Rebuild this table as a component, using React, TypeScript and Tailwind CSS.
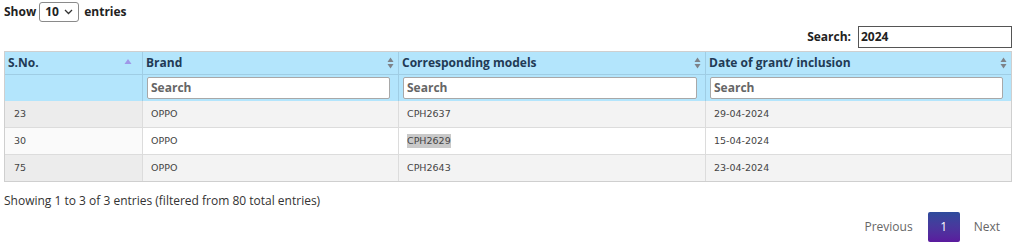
import React from "react";

const rows = [
  { sn: "23", brand: "OPPO", model: "CPH2637", date: "29-04-2024" },
  { sn: "30", brand: "OPPO", model: "CPH2629", date: "15-04-2024", hl: true },
  { sn: "75", brand: "OPPO", model: "CPH2643", date: "23-04-2024" },
];

function SortBoth() {
  return (
    <svg width="7" height="12" viewBox="0 0 7 12" className="shrink-0">
      <path d="M3.5 0.5 L6.5 5 L0.5 5 Z" fill="#7d8288" />
      <path d="M3.5 11.5 L6.5 7 L0.5 7 Z" fill="#7d8288" />
    </svg>
  );
}

function SortAsc() {
  return (
    <svg width="8" height="12" viewBox="0 0 8 12" className="shrink-0">
      <path d="M4 2 L7.5 7 L0.5 7 Z" fill="#9f97e8" />
    </svg>
  );
}

export default function App() {
  const font = { fontFamily: '"Open Sans", "Noto Sans", sans-serif' };
  const cellFont = { fontFamily: '"DejaVu Sans", Verdana, sans-serif' };
  return (
    <div className="w-[1024px] h-[251px] bg-white text-[#222] overflow-hidden" style={font}>
      <div className="px-[4px] pt-[2px]">
        <div className="flex items-center h-[20px] text-[12px] font-bold text-[#222]">
          <span>Show</span>
          <div className="ml-[3px] mr-[5px] w-[40px] h-[20px] border border-[#8a8a8a] rounded-[3px] flex items-center justify-between px-[5px] font-bold text-[12px]">
            <span>10</span>
            <svg width="9" height="6" viewBox="0 0 9 6">
              <path d="M1 1 L4.5 4.5 L8 1" stroke="#333" strokeWidth="1.3" fill="none" />
            </svg>
          </div>
          <span>entries</span>
        </div>
        <div className="flex justify-end items-center mt-[3px] h-[23px] pr-[8px]">
          <span className="text-[12px] font-bold mr-[7px]">Search:</span>
          <div className="w-[154px] h-[22px] border border-[#555] flex items-center px-[2px] text-[12px] font-bold">2024</div>
        </div>
        <div className="mt-[3px] w-[1008px] border border-[#cfcfcf]">
          <div className="grid grid-cols-[138px_256px_307px_1fr] bg-[#b3e5fc] text-[#223a55]">
            <div className="h-[23px] flex items-center justify-between pl-[3px] pr-[10px] border-r border-b border-[#9fcde4] text-[12px] font-bold">
              <span>S.No.</span>
              <SortAsc />
            </div>
            <div className="h-[23px] flex items-center justify-between pl-[3px] pr-[4px] border-r border-b border-[#9fcde4] text-[12px] font-bold">
              <span>Brand</span>
              <SortBoth />
            </div>
            <div className="h-[23px] flex items-center justify-between pl-[3px] pr-[4px] border-r border-b border-[#9fcde4] text-[12px] font-bold">
              <span>Corresponding models</span>
              <SortBoth />
            </div>
            <div className="h-[23px] flex items-center justify-between pl-[3px] pr-[4px] border-b border-[#9fcde4] text-[12px] font-bold">
              <span>Date of grant/ inclusion</span>
              <SortBoth />
            </div>
            <div className="h-[26px] border-r border-[#9fcde4]" />
            {[0, 1, 2].map((i) => (
              <div
                key={i}
                className={`h-[26px] flex items-center pl-[4px] pr-[8px] ${i < 2 ? "border-r border-[#9fcde4]" : ""}`}
              >
                <div className="w-full h-[22px] bg-white border border-[#a8a8a8] rounded-[2px] flex items-center px-[3px] text-[12px] font-bold text-[#666]">
                  Search
                </div>
              </div>
            ))}
          </div>
          {rows.map((r, idx) => {
            const odd = idx % 2 === 0;
            return (
              <div
                key={r.sn}
                className={`grid grid-cols-[138px_256px_307px_1fr] text-[9.5px] text-[#444] ${odd ? "bg-[#f3f3f3]" : "bg-white"} ${idx > 0 ? "border-t border-[#dcdcdc]" : ""}`}
                style={cellFont}
              >
                <div className={`h-[26px] flex items-center pl-[9px] border-r border-[#dcdcdc] ${odd ? "bg-[#ececec]" : "bg-[#fafafa]"}`}>{r.sn}</div>
                <div className="h-[26px] flex items-center pl-[8px] border-r border-[#dcdcdc]">{r.brand}</div>
                <div className="h-[26px] flex items-center pl-[8px] border-r border-[#dcdcdc]">
                  <span className={r.hl ? "bg-[#c9c9c9]" : ""}>{r.model}</span>
                </div>
                <div className="h-[26px] flex items-center pl-[8px]">{r.date}</div>
              </div>
            );
          })}
        </div>
        <div className="mt-[10px] text-[12px] text-[#333]">Showing 1 to 3 of 3 entries (filtered from 80 total entries)</div>
        <div className="flex justify-end items-center mt-[2px] pr-[20px] text-[12px] text-[#666]">
          <span className="mr-[15px]">Previous</span>
          <div className="w-[32px] h-[30px] rounded-[2px] bg-gradient-to-b from-[#2d4b9c] to-[#5a1a9e] text-white flex items-center justify-center">1</div>
          <span className="ml-[14px]">Next</span>
        </div>
      </div>
    </div>
  );
}
